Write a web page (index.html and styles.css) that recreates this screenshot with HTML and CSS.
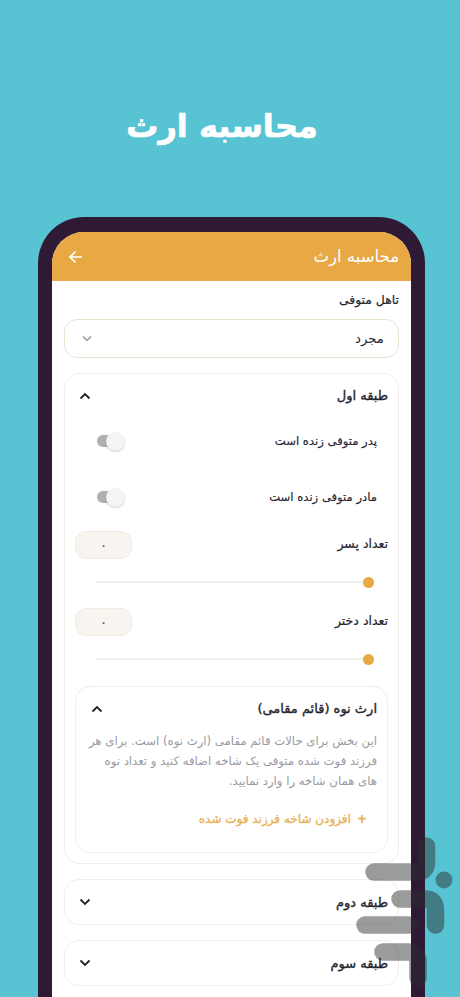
FILE: index.html
```html
<!DOCTYPE html>
<html lang="fa" dir="rtl">
<head>
<meta charset="utf-8">
<title>محاسبه ارث</title>
<link rel="stylesheet" href="styles.css">
</head>
<body>
<h1 class="title">محاسبه ارث</h1>
<div class="phone">
  <div class="screen">
    <header class="appbar">
      <span class="appbar-title">محاسبه ارث</span>
      <svg class="back" width="16" height="14" viewBox="0 0 16 14"><path d="M14 7H2M7.5 1.5 2 7l5.500 5.500" fill="none" stroke="#fff" stroke-width="1.700"/></svg>
    </header>
    <main class="content">
      <div class="label">تاهل متوفی</div>
      <div class="select">
        <span>مجرد</span>
        <svg width="10" height="7" viewBox="0 0 10 7"><path d="M1 1.500 5 5.500l4-4" fill="none" stroke="#8b8b95" stroke-width="1.200"/></svg>
      </div>
      <section class="card open">
        <div class="card-head">
          <span>طبقه اول</span>
          <svg width="12" height="8" viewBox="0 0 12 8"><path d="M1.500 6.500 6 2l4.500 4.500" fill="none" stroke="#22222c" stroke-width="1.800"/></svg>
        </div>
        <div class="toggle-row first">
          <span>پدر متوفی زنده است</span>
          <div class="toggle"><i></i></div>
        </div>
        <div class="toggle-row second">
          <span>مادر متوفی زنده است</span>
          <div class="toggle"><i></i></div>
        </div>
        <div class="count-row">
          <span class="count-label">تعداد پسر</span>
          <div class="count">۰</div>
        </div>
        <div class="slider"><i></i></div>
        <div class="count-row next">
          <span class="count-label">تعداد دختر</span>
          <div class="count">۰</div>
        </div>
        <div class="slider"><i></i></div>
        <section class="inner">
          <div class="inner-head">
            <span>ارث نوه (قائم مقامی)</span>
            <svg width="12" height="8" viewBox="0 0 12 8"><path d="M1.500 6.500 6 2l4.500 4.500" fill="none" stroke="#22222c" stroke-width="1.800"/></svg>
          </div>
          <p class="note">این بخش برای حالات قائم مقامی (ارث نوه) است. برای هر فرزند فوت شده متوفی یک شاخه اضافه کنید و تعداد نوه های همان شاخه را وارد نمایید.</p>
          <div class="add"><b>+</b><span>افزودن شاخه فرزند فوت شده</span></div>
        </section>
      </section>
      <section class="card closed">
        <span>طبقه دوم</span>
        <svg width="12" height="8" viewBox="0 0 12 8"><path d="M1.500 1.500 6 6l4.500-4.500" fill="none" stroke="#22222c" stroke-width="1.800"/></svg>
      </section>
      <section class="card closed">
        <span>طبقه سوم</span>
        <svg width="12" height="8" viewBox="0 0 12 8"><path d="M1.500 1.500 6 6l4.500-4.500" fill="none" stroke="#22222c" stroke-width="1.800"/></svg>
      </section>
    </main>
  </div>
</div>
<svg class="watermark" width="460" height="997" viewBox="0 0 460 997">
  <g fill="none" stroke="#2c2c2c" stroke-width="17.500" stroke-linecap="round">
    <path d="M374 872H417Q426.500 872 426.500 862V846"/>
    <path d="M400 899H425Q435.500 899 435.500 910V925"/>
    <path d="M365 925H409"/>
    <path d="M383 952H408Q418 952 418 962V978"/>
  </g>
  <circle cx="444" cy="880" r="8.500" fill="#2c2c2c"/>
</svg>
</body>
</html>
```
FILE: styles.css
```css
* { box-sizing: border-box; }
html, body { margin: 0; height: 997px; overflow: hidden; }
body {
  background: #57c3d3;
  font-family: "DejaVu Sans", "Noto Sans", sans-serif;
  color: #25252f;
  position: relative;
  padding-top: 104px;
}
.title {
  margin: 0 16px 0 0;
  height: 44px;
  line-height: 44px;
  text-align: center;
  width: 444px;
  color: #fff;
  font-size: 32px;
  font-weight: 700;
  -webkit-text-stroke: .7px #fff;
}
.phone {
  margin: 69px 35px 0 0;
  width: 387px;
  height: 800px;
  background: #2f1a36;
  border-radius: 46px 46px 0 0;
  padding: 15px 14px 0;
}
.screen {
  height: 100%;
  background: #fff;
  border-radius: 32px 32px 0 0;
  overflow: hidden;
}
.appbar {
  height: 49px;
  background: #e8a844;
  color: #fff;
  display: flex;
  align-items: center;
  justify-content: space-between;
  padding: 0 12px 0 16px;
}
.appbar-title { font-size: 16.500px; }
.back { display: block; }
.content { padding: 0 12px; }
.label {
  font-size: 12.400px;
  height: 38px;
  line-height: 38px;
  -webkit-text-stroke: .2px #25252f;
}
.select {
  height: 39px;
  border: 1.500px solid #ebe1d0;
  border-radius: 13px;
  display: flex;
  align-items: center;
  justify-content: space-between;
  padding: 0 14px 0 17px;
  font-size: 13.300px;
}
.card {
  border: 1.500px solid #f2eee8;
  border-radius: 15px;
}
.card.open {
  margin-top: 15px;
  height: 491px;
  padding: 0 10px;
}
.card.closed {
  margin-top: 15px;
  height: 46px;
  display: flex;
  align-items: center;
  justify-content: space-between;
  padding: 0 10px 0 14px;
  font-size: 13px;
  -webkit-text-stroke: .35px #25252f;
}
.card-head {
  height: 43px;
  display: flex;
  align-items: center;
  justify-content: space-between;
  padding-left: 4px;
  font-size: 13px;
  -webkit-text-stroke: .35px #25252f;
}
.toggle-row {
  display: flex;
  align-items: center;
  justify-content: space-between;
  height: 20px;
  padding: 0 11px 0 21px;
  font-size: 11.600px;
  -webkit-text-stroke: .15px #25252f;
}
.toggle-row.first { margin-top: 14px; }
.toggle-row.second { margin-top: 36px; }
.toggle {
  width: 29px;
  height: 19px;
  position: relative;
  display: flex;
  align-items: center;
}
.toggle::before {
  content: "";
  display: block;
  width: 24px;
  height: 12px;
  margin-right: 4px;
  border-radius: 6px;
  background: #b0b0b0;
}
.toggle i {
  position: absolute;
  left: 10px;
  top: 0;
  width: 19px;
  height: 19px;
  border-radius: 50%;
  background: #f4f4f4;
  box-shadow: 0 1px 2px rgba(0, 0, 0, .2);
}
.count-row {
  display: flex;
  align-items: center;
  justify-content: space-between;
  height: 28px;
  margin-top: 24px;
  font-size: 12.500px;
  -webkit-text-stroke: .2px #25252f;
}
.count-row.next { margin-top: 25px; }
.count-label { padding-bottom: 4px; }
.count {
  width: 57px;
  height: 28px;
  background: #f8f5f0;
  border: 1.500px solid #f1ebe1;
  border-radius: 11px;
  text-align: center;
  line-height: 27px;
  font-size: 14px;
  color: #55555f;
  -webkit-text-stroke: 0;
}
.slider {
  height: 2px;
  margin: 22px 14px 0 20px;
  background: #f2eee8;
  position: relative;
}
.slider i {
  position: absolute;
  right: 0;
  top: -4.500px;
  width: 11px;
  height: 11px;
  border-radius: 50%;
  background: #e8a844;
}
.inner {
  margin-top: 26px;
  height: 167px;
  border: 1.500px solid #f2eee8;
  border-radius: 15px;
  padding: 0 10px 0 8px;
}
.inner-head {
  height: 43px;
  display: flex;
  align-items: center;
  justify-content: space-between;
  padding-left: 7px;
  font-size: 13px;
  -webkit-text-stroke: .35px #25252f;
}
.note {
  margin: 1px 0 0;
  font-size: 11.700px;
  line-height: 20px;
  color: #9a9aa2;
}
.add {
  margin-top: 18px;
  display: flex;
  gap: 6px;
  padding-right: 10px;
  color: #e8b052;
  font-size: 12px;
  -webkit-text-stroke: .3px #e8b052;
  line-height: 20px;
}
.add b { font-weight: 700; }
.watermark {
  position: absolute;
  left: 0;
  top: 0;
  opacity: .47;
  pointer-events: none;
}
```
